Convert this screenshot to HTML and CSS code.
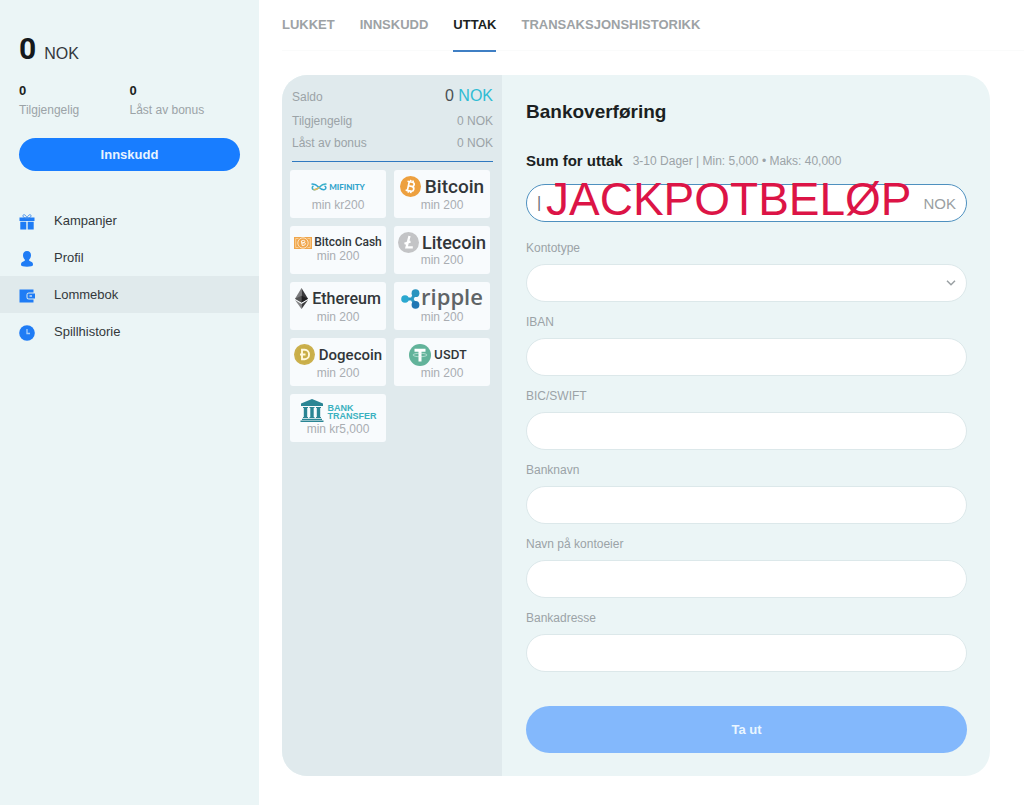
FILE: index.html
```html
<!DOCTYPE html>
<html lang="no">
<head>
<meta charset="utf-8">
<meta name="viewport" content="width=device-width, initial-scale=1">
<title>Lommebok – Uttak</title>
<link rel="stylesheet" href="styles.css">
</head>
<body>
<div class="layout">
  <aside class="sidebar">
    <section class="account">
      <p class="balance"><strong>0</strong> <span>NOK</span></p>
      <dl class="funds">
        <div><dd>0</dd><dt>Tilgjengelig</dt></div>
        <div><dd>0</dd><dt>Låst av bonus</dt></div>
      </dl>
      <button class="deposit" type="button">Innskudd</button>
    </section>
    <nav class="menu">
      <a href="#kampanjer">
        <svg viewBox="0 0 16 16" fill="#1f7cf5"><path d="M.5 3.500h15V7H.5zM1.300 7.800h6v7.700h-6zM8.700 7.800h6v7.700h-6z"/><path d="M8 4C6 4 3.500 3.500 4 1.500S7.500 1.500 8 4c.5-2.500 3.500-4.500 4-2.500S10 4 8 4z" fill="none" stroke="#4b93ec"/></svg>
        Kampanjer</a>
      <a href="#profil">
        <svg viewBox="0 0 16 16" fill="#1f7cf5"><path d="M8 0c2.600 0 4 1.800 4 4.200 0 1.800-.8 3.200-1.800 4.300v1.300l2.500 1.200c1 .4 1.300 1.400 1.300 3 0 1.100-2.500 1.700-6 1.700S2 15.100 2 14c0-1.600.3-2.600 1.300-3l2.500-1.200V8.500C4.800 7.400 4 6 4 4.200 4 1.800 5.400 0 8 0z"/></svg>
        Profil</a>
      <a class="active" href="#lommebok">
        <svg viewBox="0 0 16 16" fill="#1f7cf5"><path d="M.5 1.500h14v3H10A2.500 2.500 0 0 0 7.500 7v2A2.500 2.500 0 0 0 10 11.500h4.500v3H.5z"/><path d="M9.500 5.500h6.500v5H9.500a1 1 0 0 1-1-1v-3a1 1 0 0 1 1-1z"/><path d="M10.500 7h2.500v2h-2.500z" fill="#9cc3f5"/></svg>
        Lommebok</a>
      <a href="#spillhistorie">
        <svg viewBox="0 0 16 16"><circle cx="8" cy="8" r="7.800" fill="#1f7cf5"/><path d="M8 4v4.500h3" fill="none" stroke="#a5cdfb" stroke-width="1.300"/></svg>
        Spillhistorie</a>
    </nav>
  </aside>

  <main class="main">
    <nav class="tabs">
      <a href="#lukket">LUKKET</a>
      <a href="#innskudd">INNSKUDD</a>
      <a class="active" href="#uttak">UTTAK</a>
      <a href="#historikk">TRANSAKSJONSHISTORIKK</a>
    </nav>

    <div class="card">
      <section class="methods">
        <dl class="summary">
          <div class="total"><dt>Saldo</dt><dd>0 <span>NOK</span></dd></div>
          <div><dt>Tilgjengelig</dt><dd>0 NOK</dd></div>
          <div><dt>Låst av bonus</dt><dd>0 NOK</dd></div>
        </dl>
        <div class="tiles">
          <button type="button" class="tile mifinity">
            <span class="logo"><svg width="16" height="8" viewBox="0 0 16 8" fill="none" stroke-width="1.500"><path d="M.5 1.200C4 .6 5.500 2 7.500 4s3.500 3 6 2.600C15.500 6 15.300 3.500 13.500 3" stroke="#31a6cf"/><path d="M15.500 1.200C12 .6 10.500 2 8.500 4S5 7 2.500 6.600C.7 6 .9 3.800 2.500 3" stroke="#3bb0c9"/><path d="M2.500 6.600C5 7 6.500 6 8.300 4.200" stroke="#e8b95a"/></svg><b>MIFINITY</b></span>
            <span class="min">min kr200</span>
          </button>
          <button type="button" class="tile bitcoin">
            <span class="logo"><svg width="21" height="21" viewBox="0 0 21 21"><circle cx="10.500" cy="10.500" r="10.500" fill="#eda03f"/><g transform="rotate(12 10.500 10.500)" fill="none" stroke="#fff" stroke-width="1.700"><path d="M6.500 6h4.800c3.200 0 3.200 4.200 0 4.200H8.300h3.400c3.400 0 3.400 4.800 0 4.800H6.500M8.300 6v9M9.500 4v2M12 4v2M9.500 15v2M12 15v2"/></g></svg><b>Bitcoin</b></span>
            <span class="min">min 200</span>
          </button>
          <button type="button" class="tile cash">
            <span class="logo"><svg width="18" height="12" viewBox="0 0 18 12"><path d="M0 0h18v12H0z" fill="#f0a64c"/><path d="M4.500 1.500H1.700v9h2.800M13.500 1.500h2.800v9h-2.800" fill="none" stroke="#fbd9a8" stroke-width=".8"/><circle cx="9" cy="6" r="5.200" fill="#f0a64c" stroke="#fff3df" stroke-width=".8"/><path d="M7.300 4l2.200-.6c1.500-.3 1.800 1.800.4 2.200l-1.700.4 1.900-.3c1.600-.2 1.800 2 .2 2.400l-2 .5z" fill="none" stroke="#fff" stroke-width=".9"/></svg><b>Bitcoin Cash</b></span>
            <span class="min">min 200</span>
          </button>
          <button type="button" class="tile litecoin">
            <span class="logo"><svg width="21" height="21" viewBox="0 0 21 21"><circle cx="10.500" cy="10.500" r="10.500" fill="#c3c4c6"/><path d="M11.500 4 8.500 15.300h6.300M6.500 11.800l6-2.300" fill="none" stroke="#fff" stroke-width="2.300"/></svg><b>Litecoin</b></span>
            <span class="min">min 200</span>
          </button>
          <button type="button" class="tile ethereum">
            <span class="logo"><svg width="13" height="21" viewBox="0 0 13 21"><path d="M6.500 0v14.500L0 10.700z" fill="#7b7b7d"/><path d="M6.500 0v14.500l6.500-3.800z" fill="#39393b"/><path d="M6.500 7.700v6.800L0 10.700z" fill="#555"/><path d="M6.500 7.700v6.800l6.500-3.800z" fill="#1f1f21"/><path d="M0 12l6.500 3.900V21z" fill="#858587"/><path d="M13 12l-6.500 3.900V21z" fill="#3c3c3e"/></svg><b>Ethereum</b></span>
            <span class="min">min 200</span>
          </button>
          <button type="button" class="tile ripple">
            <span class="logo"><svg width="19" height="20" viewBox="0 0 19 20"><path d="M4 10h7l3-5.500M11 10l3 5.500" fill="none" stroke="#2c9ac4" stroke-width="3"/><circle cx="4" cy="10" r="3.800" fill="#2ba8d0"/><circle cx="14.500" cy="4.200" r="3.900" fill="#2a94bf"/><circle cx="14.500" cy="15.800" r="3.900" fill="#2077b4"/></svg><b>ripple</b></span>
            <span class="min">min 200</span>
          </button>
          <button type="button" class="tile dogecoin">
            <span class="logo"><svg width="21" height="21" viewBox="0 0 21 21"><circle cx="10.500" cy="10.500" r="10.500" fill="#cbb04d"/><circle cx="10.500" cy="10.500" r="8.500" fill="#c9ae48"/><path d="M8 5.800h2.700c5.800 0 5.800 9.400 0 9.400H8zM6 10.500h5.500" fill="none" stroke="#fff8dc" stroke-width="1.900"/></svg><b>Dogecoin</b></span>
            <span class="min">min 200</span>
          </button>
          <button type="button" class="tile usdt">
            <span class="logo"><svg width="22" height="22" viewBox="0 0 22 22"><circle cx="11" cy="11" r="11" fill="#62b39a"/><path d="M5.500 6.300h11M11 6v11.500" stroke="#fff" stroke-width="3" fill="none"/><ellipse cx="11" cy="11" rx="7" ry="1.700" fill="none" stroke="#e6f5f0" stroke-width=".6"/></svg><b>USDT</b></span>
            <span class="min">min 200</span>
          </button>
          <button type="button" class="tile bank">
            <span class="logo"><svg width="24" height="23" viewBox="0 0 24 23" fill="#2a8594"><path d="M12 0l11 4.500V7H1V4.500zM3 8h5v1h-.8v9H8v1H3v-1h.8V9H3zM9.500 8h5v1h-.8v9h.8v1h-5v-1h.8V9h-.8zM16 8h5v1h-.8v9h.8v1h-5v-1h.8V9H16zM2 19.700h20V21H2zM.5 21.600h23V23H.5z"/></svg><b>BANK<br>TRANSFER</b></span>
            <span class="min">min kr5,000</span>
          </button>
        </div>
      </section>

      <form class="form">
        <h1>Bankoverføring</h1>
        <div class="amount-head"><label for="amount">Sum for uttak</label><span>3-10 Dager | Min: 5,000 • Maks: 40,000</span></div>
        <div class="amount">
          <input id="amount" type="text" inputmode="decimal" value="|">
          <span class="currency">NOK</span>
          <span class="stamp">JACKPOTBELØP</span>
        </div>
        <div class="field">
          <label for="type">Kontotype</label>
          <div class="select"><select id="type"><option></option></select><svg width="10" height="6" viewBox="0 0 10 6"><path d="M1 .8 5 4.800 9 .8" fill="none" stroke="#9aa0a3" stroke-width="1.500"/></svg></div>
        </div>
        <div class="field"><label for="iban">IBAN</label><input id="iban" type="text"></div>
        <div class="field"><label for="bic">BIC/SWIFT</label><input id="bic" type="text"></div>
        <div class="field"><label for="bankname">Banknavn</label><input id="bankname" type="text"></div>
        <div class="field"><label for="owner">Navn på kontoeier</label><input id="owner" type="text"></div>
        <div class="field"><label for="address">Bankadresse</label><input id="address" type="text"></div>
        <button class="submit" type="button">Ta ut</button>
      </form>
    </div>
  </main>
</div>
</body>
</html>
```
FILE: styles.css
```css
* { box-sizing: border-box; }
body { margin: 0; background: #fff; color: #1b1f22; font-family: "Liberation Sans", Arial, sans-serif; font-size: 13px; }
p, dl, dd, h1 { margin: 0; }
a { color: inherit; text-decoration: none; }
button, input, select { font: inherit; color: inherit; border: 0; margin: 0; }
svg { flex: none; display: block; }

.layout { display: flex; min-height: 100vh; }

.sidebar { flex: none; width: 259px; background: #ebf5f6; }
.account { padding: 31px 19px 31px; }
.balance { display: flex; align-items: baseline; gap: 8px; line-height: 36px; font-size: 16px; color: #33383b; }
.balance strong { font-family: Roboto, sans-serif; font-size: 30px; color: #15191c; }
.funds { display: grid; grid-template-columns: 1fr 1fr; margin-top: 10px; }
.funds div { display: flex; flex-direction: column; }
.funds dd { font-size: 13px; line-height: 18px; font-weight: 700; }
.funds dt { font-size: 12px; line-height: 20px; color: #9ba3a7; }
.deposit { display: block; width: 100%; height: 33px; margin-top: 18px; border-radius: 17px; background: #187dff; color: #e8f4ff; font-weight: 700; }
.menu a { display: flex; align-items: center; gap: 19px; height: 37px; padding-left: 19px; color: #33383b; }
.menu a.active { background: #e0eaec; }
.menu svg { width: 16px; height: 16px; margin-top: 3px; }

.main { flex: 1; min-width: 0; padding-bottom: 29px; }
.tabs { display: flex; gap: 25px; height: 51px; margin-left: 23px; border-bottom: 1px solid #fafbfb; font-weight: 700; line-height: 50px; color: #9da2a5; }
.tabs .active { color: #1b1f22; border-bottom: 2px solid #3f7fc4; height: 52px; }

.card { display: grid; grid-template-columns: 220px 1fr; margin: 24px 34px 0 23px; border-radius: 25px; overflow: hidden; background: #ebf5f6; }
.methods { background: #e0eaed; }
.summary { margin: 0 9px 0 10px; padding: 10px 0 7px; border-bottom: 1px solid #2f79c0; font-size: 12px; color: #9ba3a7; }
.summary div { display: flex; justify-content: space-between; line-height: 22px; }
.summary .total { line-height: 25px; }
.summary .total dd { font-size: 16px; line-height: 22px; color: #4a5054; }
.summary .total span { color: #2fbcd4; }

.tiles { display: grid; grid-template-columns: 1fr 1fr; gap: 8px; padding: 8px 12px 8px 8px; }
.tile { display: flex; flex-direction: column; align-items: center; height: 48px; padding: 5px 0 0; border-radius: 3px; background: #f8fbfd; cursor: pointer; }
.logo { display: flex; align-items: center; justify-content: center; gap: 4px; height: 23px; white-space: nowrap; color: #323639; font-family: Roboto, sans-serif; }
.logo b { font-weight: 500; }
.min { font-size: 12px; line-height: 14px; color: #a9adb2; }
.mifinity .logo { gap: 2px; }
.mifinity b { font-family: Lato, sans-serif; font-size: 8px; font-weight: 900; color: #2fa3cc; }
.bitcoin b { font-size: 19px; }
.cash .logo { height: 18px; gap: 2px; align-items: flex-end; }
.cash b { font-size: 12px; line-height: 13px; }
.litecoin b { font-size: 18px; }
.litecoin .logo { gap: 3px; height: 22px; }
.ethereum b { font-size: 16px; }
.ripple .logo { gap: 1px; }
.ripple b { font-family: "Open Sans", sans-serif; font-size: 22px; font-weight: 600; line-height: 18px; padding-bottom: 5px; color: #5f6467; }
.dogecoin b { font-size: 15px; }
.usdt .logo { gap: 3px; padding-right: 8px; }
.usdt b { font-family: Inter, sans-serif; font-size: 12px; font-weight: 600; }
.bank b { font-family: "Liberation Sans", Arial, sans-serif; font-size: 9px; line-height: 8px; color: #3bb1c0; font-weight: 700; text-align: left; padding-top: 3px; }

.form { padding: 24px 23px 23px 24px; display: flex; flex-direction: column; }
.form h1 { font-size: 19px; line-height: 26px; font-weight: 700; }
.amount-head { display: flex; align-items: center; gap: 10px; margin-top: 26px; line-height: 20px; color: #9ba3a7; font-size: 12px; }
.amount-head label { font-size: 15px; font-weight: 700; color: #1b1f22; }
.form input, .form select { display: block; width: 100%; height: 38px; padding: 0 16px; border: 1px solid #dce8ea; border-radius: 19px; background: #fff; outline: 0; }
.amount { position: relative; display: flex; align-items: center; margin: 13px 0 6px; }
.form .amount input { border-color: #4e90bf; padding: 0 60px 0 10px; color: #6c7276; font-size: 16px; }
.currency { position: absolute; right: 11px; font-size: 15px; color: #9a9fa2; }
.stamp { position: absolute; left: 20px; top: -12px; font-size: 46px; line-height: 54px; color: #dc1446; pointer-events: none; }
.field { margin-top: 12px; }
.field label { display: block; margin-bottom: 8px; font-size: 12px; line-height: 16px; color: #9ba3a7; }
.select { position: relative; }
.select select { appearance: none; }
.select svg { position: absolute; right: 11px; top: 16px; pointer-events: none; }
.submit { height: 47px; margin-top: 34px; border-radius: 24px; background: #83b8fc; color: #eaf6ff; font-weight: 700; }
```
